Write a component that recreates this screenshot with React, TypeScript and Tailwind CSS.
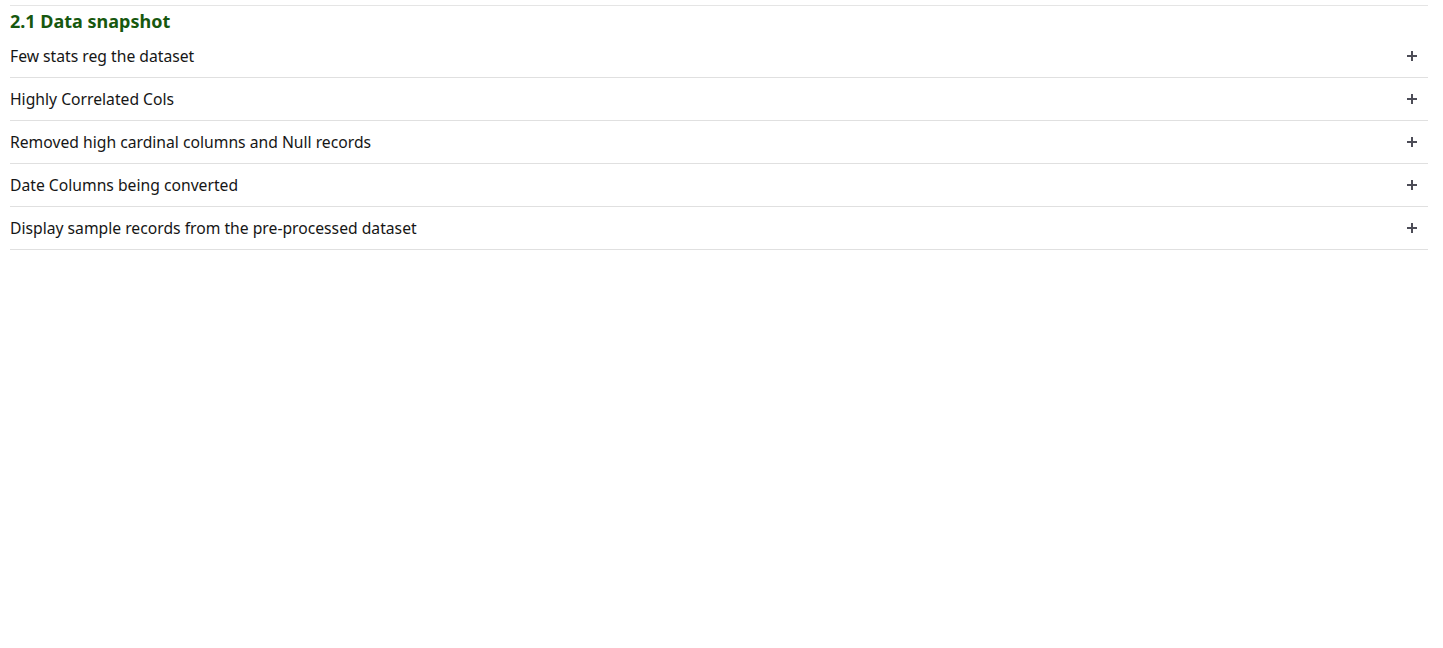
import React from 'react';

const items = [
  'Few stats reg the dataset',
  'Highly Correlated Cols',
  'Removed high cardinal columns and Null records',
  'Date Columns being converted',
  'Display sample records from the pre-processed dataset',
];

const PlusIcon: React.FC = () => (
  <svg width="10" height="10" viewBox="0 0 10 10" className="text-[#4d4d57]">
    <path d="M5 0v10M0 5h10" stroke="currentColor" strokeWidth="2" />
  </svg>
);

function App() {
  return (
    <div className="min-h-screen bg-white pl-[10px] pr-[15px] pt-[5px]" style={{ fontFamily: '"Noto Sans", "Open Sans", sans-serif' }}>
      <div className="border-t border-[#e5e5e5]">
        <h2 className="h-[29px] pt-[2px] flex items-center text-[18px] font-bold text-[#17580f]">2.1 Data snapshot</h2>
        {items.map((label) => (
          <div key={label} className="h-[43px] flex items-center justify-between border-b border-[#e0e0e0] pr-[11px]">
            <span className="pt-[2px] text-[15.7px] text-[#161616]">{label}</span>
            <PlusIcon />
          </div>
        ))}
      </div>
    </div>
  );
}

export default App;
